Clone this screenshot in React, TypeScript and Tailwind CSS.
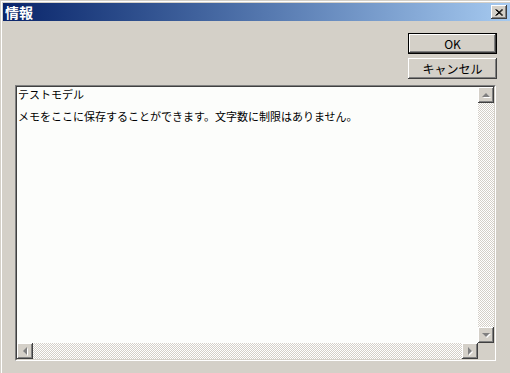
const raised =
  'shadow-[inset_-1px_-1px_#404040,inset_1px_1px_#ffffff,inset_-2px_-2px_#808080,inset_2px_2px_#d4d0c8]';

function Arrow({ dir }: { dir: 'up' | 'down' | 'left' | 'right' }) {
  const pts: Record<string, string> = {
    up: '4,1 0,5 8,5',
    down: '0,1 8,1 4,5',
    left: '5,0 5,8 1,4',
    right: '1,0 1,8 5,4',
  };
  const vertical = dir === 'up' || dir === 'down';
  return (
    <svg width={vertical ? 9 : 7} height={vertical ? 7 : 9} viewBox={vertical ? '0 0 9 7' : '0 0 7 9'}>
      <polygon points={pts[dir]} transform="translate(1,1)" fill="#ffffff" />
      <polygon points={pts[dir]} fill="#808080" />
    </svg>
  );
}

function ScrollButton({ dir }: { dir: 'up' | 'down' | 'left' | 'right' }) {
  return (
    <div className={`w-4 h-4 bg-[#d4d0c8] flex items-center justify-center ${raised}`}>
      <Arrow dir={dir} />
    </div>
  );
}

const track = 'bg-[repeating-conic-gradient(#d4d0c8_0_25%,#ffffff_0_50%)] bg-[length:2px_2px]';

export default function App() {
  return (
    <div
      className="w-[510px] h-[373px] bg-[#d4d0c8] pt-px pl-px overflow-hidden"
      style={{ fontFamily: '"Noto Sans CJK JP", "Noto Sans", sans-serif' }}
    >
      <div className="h-full border-t border-l border-white pt-px pl-px flex flex-col">
        {/* title bar */}
        <div className="h-[18px] flex items-center bg-gradient-to-r from-[#0a246a] to-[#a6caf0] pl-[2px] pr-[3px]">
          <span className="text-white font-bold text-[14px] leading-none">情報</span>
          <div className={`ml-auto w-4 h-[14px] bg-[#d4d0c8] flex items-center justify-center ${raised}`}>
            <svg width="8" height="7" viewBox="0 0 8 7">
              <path d="M0.5 0.5 L7 6.5 M1.5 0.5 L8 6.5 M7 0.5 L0.5 6.5 M8 0.5 L1.5 6.5" stroke="#000" strokeWidth="1" />
            </svg>
          </div>
        </div>

        {/* body */}
        <div className="flex-1 flex flex-col pl-[12px]">
          <div className="flex flex-col items-end gap-[4px] pt-[12px] pr-[13px]">
            <button className="w-[89px] h-[21px] border border-black bg-[#d4d0c8] text-[12px] text-black leading-none flex items-center justify-center shadow-[inset_-1px_-1px_#404040,inset_1px_1px_#ffffff,inset_-2px_-2px_#808080]">
              OK
            </button>
            <button className={`w-[89px] h-[21px] bg-[#d4d0c8] text-[12px] text-black leading-none flex items-center justify-center ${raised}`}>
              キャンセル
            </button>
          </div>

          {/* memo edit */}
          <div className="mt-[6px] mr-[14px] h-[276px] border-t border-l border-[#808080] border-r border-b border-r-white border-b-white">
            <div className="h-full border-t border-l border-[#404040] border-r border-b border-r-[#d4d0c8] border-b-[#d4d0c8] grid grid-cols-[1fr_16px] grid-rows-[1fr_16px]">
              <div className="bg-[#fcfdfb] pl-px text-[11px] leading-[14px] text-black">
                <div>テストモデル</div>
                <div className="mt-[8px]">メモをここに保存することができます。文字数に制限はありません。</div>
              </div>
              <div className={`flex flex-col justify-between ${track}`}>
                <ScrollButton dir="up" />
                <ScrollButton dir="down" />
              </div>
              <div className={`flex justify-between ${track}`}>
                <ScrollButton dir="left" />
                <ScrollButton dir="right" />
              </div>
              <div className="bg-[#d4d0c8]" />
            </div>
          </div>
        </div>
      </div>
    </div>
  );
}
